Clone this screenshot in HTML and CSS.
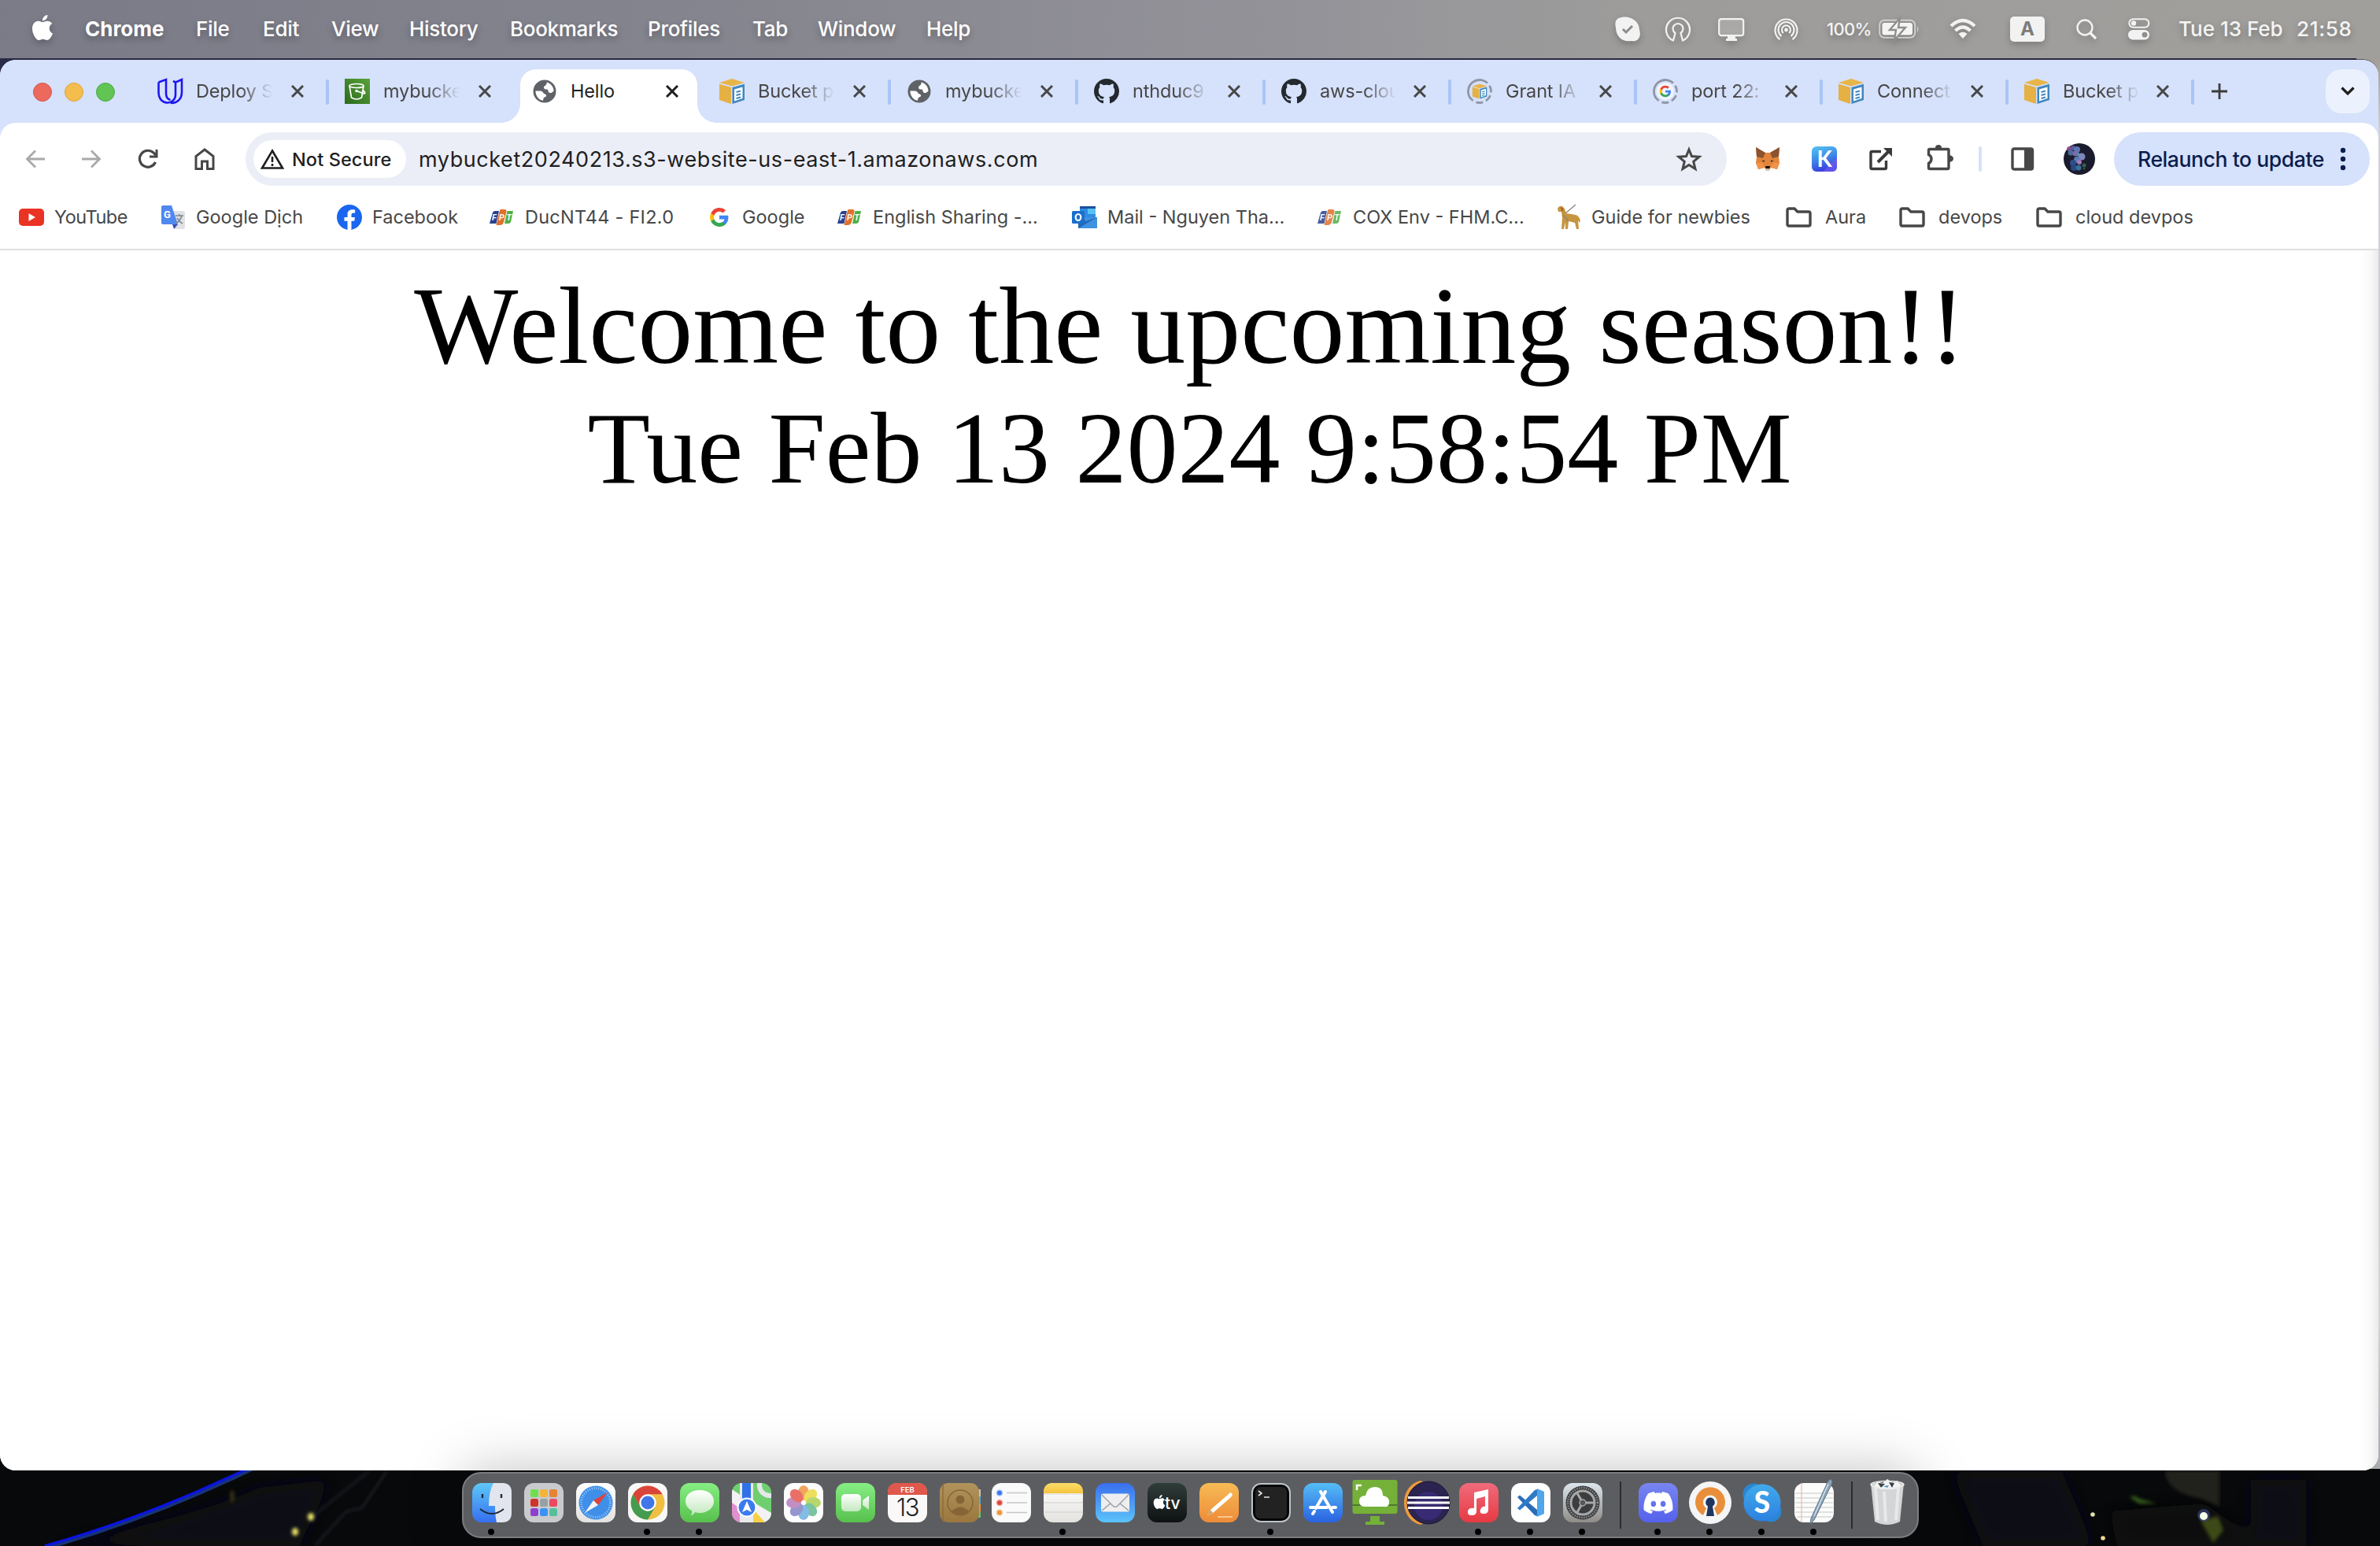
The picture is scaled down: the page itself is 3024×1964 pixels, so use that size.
FILE: index.html
```html
<!DOCTYPE html>
<html lang="en">
<head>
<meta charset="utf-8">
<title>Hello</title>
<link rel="stylesheet" href="styles.css">
</head>
<body>
<svg class="defs" width="0" height="0" aria-hidden="true">
  <defs>
    <linearGradient id="gGreen" x1="0" y1="0" x2="0" y2="1"><stop offset="0" stop-color="#86ee83"/><stop offset="1" stop-color="#57c04d"/></linearGradient>
    <linearGradient id="gWhite" x1="0" y1="0" x2="0" y2="1"><stop offset="0" stop-color="#fff"/><stop offset="1" stop-color="#e3e2df"/></linearGradient>
    <linearGradient id="gBubble" x1="0" y1="0" x2="0" y2="1"><stop offset="0" stop-color="#fff"/><stop offset="1" stop-color="#c3e8bd"/></linearGradient>
    <linearGradient id="gBlue" x1="0" y1="0" x2="0" y2="1"><stop offset="0" stop-color="#55bdf6"/><stop offset="1" stop-color="#2a62e0"/></linearGradient>
    <linearGradient id="gFinder" x1="0" y1="0" x2="0" y2="1"><stop offset="0" stop-color="#5ec8f8"/><stop offset="1" stop-color="#356ff0"/></linearGradient>
    <linearGradient id="gMail" x1="0" y1="0" x2="0" y2="1"><stop offset="0" stop-color="#3a6fee"/><stop offset="1" stop-color="#5cc3fa"/></linearGradient>
    <linearGradient id="gOrange" x1="0" y1="0" x2="0" y2="1"><stop offset="0" stop-color="#f7bb54"/><stop offset="1" stop-color="#ee8b3a"/></linearGradient>
    <linearGradient id="gRed" x1="0" y1="0" x2="0" y2="1"><stop offset="0" stop-color="#f06b7b"/><stop offset="1" stop-color="#e63a43"/></linearGradient>
    <linearGradient id="gTv" x1="0" y1="0" x2="0" y2="1"><stop offset="0" stop-color="#2f3d39"/><stop offset="1" stop-color="#0e1112"/></linearGradient>
    <linearGradient id="gSet" x1="0" y1="0" x2="0" y2="1"><stop offset="0" stop-color="#dbe6ec"/><stop offset="1" stop-color="#8f8c88"/></linearGradient>
    <linearGradient id="gContact" x1="0" y1="0" x2="0" y2="1"><stop offset="0" stop-color="#b1935c"/><stop offset="1" stop-color="#9b773f"/></linearGradient>
    <linearGradient id="gDiscord" x1="0" y1="0" x2="0" y2="1"><stop offset="0" stop-color="#7885f0"/><stop offset="1" stop-color="#5561ec"/></linearGradient>
    <linearGradient id="gKiwi" x1="0" y1="0" x2="0.3" y2="1"><stop offset="0" stop-color="#58c4f0"/><stop offset="0.5" stop-color="#3f8ee8"/><stop offset="1" stop-color="#3a3fe0"/></linearGradient>
    <linearGradient id="gS3" x1="0" y1="1" x2="1" y2="0"><stop offset="0" stop-color="#2a6b1d"/><stop offset="1" stop-color="#5aa33a"/></linearGradient>
    <linearGradient id="gNote" x1="0" y1="0" x2="0" y2="1"><stop offset="0" stop-color="#fbdd69"/><stop offset="1" stop-color="#f5c43c"/></linearGradient>
    <symbol id="close" viewBox="0 0 16 16"><path d="M1 1L15 15M15 1L1 15" stroke="currentColor" stroke-width="3" fill="none"/></symbol>
    <symbol id="cube" viewBox="0 0 32 32"><path d="M0 5L16 0 32 5 16 9.500z" fill="#e8b548"/><path d="M0 6.800L15 11V32L0 27z" fill="#e5b044"/><path d="M16.500 11L32 6.800V27L16.500 32z" fill="#3f87c0"/><path d="M19 13.500L29.500 10.500V25L19 28.500z" fill="#fff"/><path d="M21.500 17L27 15.500M21.500 21L27 19.500M21.500 25L27 23.500" stroke="#3f87c0" stroke-width="2"/></symbol>
    <symbol id="globe" viewBox="0 0 30 30"><circle cx="15" cy="15" r="14.500" fill="#5f6368"/><path d="M17 3.500C20 5 21 6 19.500 8.500 18 10 15.500 9.500 15.500 12 16 14 19 13 20.500 15.500 21.500 18 24 17 26.800 15.500 26.500 20 24 24 19.500 26 17 26.500 16.500 25 17 23 17.500 20.500 15 20.500 14.500 18 14 15.500 12 16.500 9 15.500 6 15 4.500 14 3.400 12.500 5 7 10 3 17 3.500z" fill="#fff" opacity=".0"/><path d="M3.500 14.500H9.500C13 14.500 13 18 15.500 18.500 18 19.500 17.500 22 15 22.500 13 23 13.500 25.500 13 26.800 7.500 26 3.300 20.500 3.500 14.500zM17.500 3.600C22.500 4.500 26.600 9.500 26.500 14.500 25 16.500 22.500 18 20.500 16.500 19 15 20 12.500 17.500 12.500 15.500 12.500 14 12 14 10 14 8 18.500 7.500 17.500 3.600z" fill="#fff"/></symbol>
    <symbol id="github" viewBox="0 0 16 16"><path fill="#24292f" d="M8 0C3.58 0 0 3.58 0 8c0 3.54 2.29 6.53 5.47 7.59.4.07.55-.17.55-.38 0-.19-.01-.82-.01-1.49-2.01.37-2.53-.49-2.69-.94-.09-.23-.48-.94-.82-1.13-.28-.15-.68-.52-.01-.53.63-.01 1.08.58 1.23.82.72 1.21 1.87.87 2.33.66.07-.52.28-.87.51-1.07-1.78-.2-3.64-.89-3.64-3.95 0-.87.31-1.59.82-2.15-.08-.2-.36-1.02.08-2.12 0 0 .67-.21 2.2.82.64-.18 1.32-.27 2-.27s1.36.09 2 .27c1.53-1.04 2.2-.82 2.2-.82.44 1.1.16 1.92.08 2.12.51.56.82 1.27.82 2.15 0 3.07-1.87 3.75-3.65 3.95.29.25.54.73.54 1.48 0 1.07-.01 1.93-.01 2.2 0 .21.15.46.55.38A8.01 8.01 0 0 0 16 8c0-4.42-3.58-8-8-8z"/></symbol>
    <symbol id="gee" viewBox="0 0 48 48"><path fill="#4285F4" d="M45.12 24.5c0-1.56-.14-3.06-.4-4.5H24v8.51h11.84c-.51 2.75-2.06 5.08-4.39 6.64v5.52h7.11c4.16-3.83 6.56-9.47 6.56-16.17z"/><path fill="#34A853" d="M24 46c5.94 0 10.92-1.97 14.56-5.33l-7.11-5.52c-1.97 1.32-4.49 2.1-7.45 2.1-5.73 0-10.58-3.87-12.31-9.07H4.34v5.7C7.96 41.07 15.4 46 24 46z"/><path fill="#FBBC05" d="M11.69 28.18C11.25 26.86 11 25.45 11 24s.25-2.86.69-4.18v-5.7H4.34C2.85 17.09 2 20.45 2 24c0 3.55.85 6.91 2.34 9.88l7.35-5.7z"/><path fill="#EA4335" d="M24 10.75c3.23 0 6.13 1.11 8.41 3.29l6.31-6.31C34.91 4.18 29.93 2 24 2 15.4 2 7.96 6.93 4.34 14.12l7.35 5.7c1.73-5.2 6.58-9.07 12.31-9.07z"/></symbol>
    <symbol id="fpt" viewBox="0 0 32 32"><path d="M4 10Q5 8 7 8H12L8.500 24H0z" fill="#27418f"/><path d="M14 6H19Q22 6 21.500 9L18 22Q17 26 13 26H8.500L12.500 9Q13 6 14 6z" fill="#e0702b"/><path d="M22.500 8H30L27 22Q26 24 24 24H19z" fill="#4faf45"/><g fill="#fff" font-family="Liberation Sans, sans-serif" font-weight="700" font-style="italic" font-size="10"><text x="3" y="19.500">F</text><text x="12" y="19.500">P</text><text x="21.500" y="19.500">T</text></g></symbol>
    <symbol id="ring" viewBox="0 0 32 32"><circle cx="16" cy="16" r="14.500" fill="none" stroke="#9096a6" stroke-width="2.800" stroke-dasharray="9 4 9 4 9 4 9 4 40 0" transform="rotate(-82 16 16)"/></symbol>
    <symbol id="folder" viewBox="0 0 33 26"><path d="M4 2H11L15 6H29Q31 6 31 8V22Q31 24 29 24H4Q2 24 2 22V4Q2 2 4 2z" fill="none" stroke="#474747" stroke-width="3.400"/></symbol>
    <symbol id="apple" viewBox="0 0 24 24"><path fill="#fff" d="M12.152 6.896c-.948 0-2.415-1.078-3.96-1.04-2.04.027-3.91 1.183-4.961 3.014-2.117 3.675-.546 9.103 1.519 12.09 1.013 1.454 2.208 3.09 3.792 3.039 1.52-.065 2.09-.987 3.935-.987 1.831 0 2.35.987 3.96.948 1.637-.026 2.676-1.48 3.676-2.948 1.156-1.688 1.636-3.325 1.662-3.415-.039-.013-3.182-1.221-3.22-4.857-.026-3.04 2.48-4.494 2.597-4.559-1.429-2.09-3.623-2.324-4.39-2.376-2-.156-3.675 1.09-4.61 1.09zM15.53 3.83c.843-1.012 1.4-2.427 1.245-3.83-1.207.052-2.662.805-3.532 1.818-.78.896-1.454 2.338-1.273 3.714 1.338.104 2.715-.688 3.559-1.701"/></symbol>
  </defs>
</svg>

<div class="desktop">
  <svg class="wallpaper" viewBox="0 0 3024 104" width="3024" height="104" aria-hidden="true">
    <defs><filter id="soft"><feGaussianBlur stdDeviation="2"/></filter><filter id="softer"><feGaussianBlur stdDeviation="12"/></filter></defs>
    <rect width="3024" height="104" fill="#08090b"/>
    <g filter="url(#softer)"><path d="M60 104Q240 70 330 30L420 20 380 104z" fill="#0d0e12"/><path d="M2480 10H2620L2660 104H2520z" fill="#0e1118"/><path d="M2680 60L2800 50 2880 104H2690z" fill="#0b0d0b"/><path d="M2860 20H2930V104H2860z" fill="#0f1014"/></g>
    <path d="M58 106Q196 67 338 -3" fill="none" stroke="#2458d0" stroke-width="6" opacity=".55"/>
    <path d="M57 104Q195 65 337 -5" fill="none" stroke="#0c14e0" stroke-width="3.500"/>
    <path d="M395 68L470 8M400 104L440 60 460 56 492 8" fill="none" stroke="#202126" stroke-width="2.500" filter="url(#soft)"/>
    <g filter="url(#soft)"><ellipse cx="395" cy="67" rx="4" ry="5" fill="#f2ea6a"/><ellipse cx="375" cy="86" rx="4" ry="5" fill="#f2ea6a"/><ellipse cx="295" cy="41" rx="2.500" ry="8" fill="#3c3818"/><path d="M2751 8H2820V54L2798 44Q2752 36 2751 8z" fill="#22241a"/><path d="M2706 42Q2712 38 2718 44L2740 50 2718 50z" fill="#355f1a"/><path d="M2796 72L2818 66 2825 84 2812 100z" fill="#3d4a18"/></g>
    <circle cx="2800" cy="65" r="8" fill="#4c58a0" opacity=".5"/><circle cx="2800" cy="66" r="5" fill="#f4ffe8"/><circle cx="2659" cy="64" r="2.800" fill="#e0e0b0"/><circle cx="2672" cy="94" r="2.800" fill="#f0d890"/>
  </svg>

  <header class="menubar">
    <nav class="menus">
      <svg class="apple" width="32" height="32"><use href="#apple"/></svg>
      <b class="m-chrome">Chrome</b><span>File</span><span>Edit</span><span>View</span><span>History</span><span class="m-book">Bookmarks</span><span>Profiles</span><span>Tab</span><span>Window</span><span>Help</span>
    </nav>
    <div class="status">
      <svg width="32" height="32" viewBox="0 0 32 32"><path d="M9 1C15 -1 31 3 31 17 34 25 29 33 21 31 9 33 1 25 1 14 -1 7 2 1 9 1z" fill="#f2f2f2"/><path d="M10 16L14 20 22 12" stroke="#8c8b8a" stroke-width="3" fill="none"/></svg>
      <svg width="32" height="32" viewBox="0 0 32 32"><path d="M10 30.500A15 15 0 1 1 22 30.500L19.500 21A6.500 6.500 0 1 0 12.500 21z" fill="none" stroke="#f2f2f2" stroke-width="2.200" stroke-linejoin="round"/></svg>
      <svg width="34" height="30" viewBox="0 0 34 30"><rect x="1.200" y="2.200" width="31" height="21" rx="3" fill="#fff" fill-opacity=".2" stroke="#f2f2f2" stroke-width="2.200"/><path d="M12 23H22V27H24V30H10V27H12z" fill="#f2f2f2"/></svg>
      <svg width="31" height="31" viewBox="0 0 31 31"><g fill="none" stroke="#f2f2f2" stroke-width="2.200"><path d="M7.500 28A14 14 0 1 1 23.500 28"/><path d="M9.500 24A10 10 0 1 1 21.500 24"/><path d="M11.800 20A5.500 5.500 0 1 1 19.200 20"/></g><circle cx="15.500" cy="16" r="2.400" fill="#f2f2f2"/></svg>
      <span class="pct">100%</span>
      <svg width="52" height="26" viewBox="0 0 52 26"><rect x="1.200" y="1.800" width="45" height="22" rx="6" fill="none" stroke="#cfcfcf" stroke-width="2"/><rect x="4.500" y="5" width="38.500" height="15.600" rx="3" fill="#f4f4f4"/><path d="M49 9Q52 13 49 17z" fill="#cfcfcf"/><path d="M27 -1L14 14H22L20 27 34 11H25z" fill="#f4f4f4" stroke="#8f8e8d" stroke-width="2.400"/></svg>
      <svg width="34" height="26" viewBox="0 0 34 26"><path d="M2 9Q17 -5 32 9M7.500 15Q17 6 26.500 15" fill="none" stroke="#f2f2f2" stroke-width="4.200"/><path d="M11.500 19Q17 14.500 22.500 19L17 25z" fill="#f2f2f2"/></svg>
      <span class="input">A</span>
      <svg width="27" height="27" viewBox="0 0 27 27"><circle cx="11" cy="11" r="9.500" fill="none" stroke="#f2f2f2" stroke-width="2.400"/><path d="M18 18L25 25" stroke="#f2f2f2" stroke-width="3.200"/></svg>
      <svg width="28" height="28" viewBox="0 0 28 28"><rect x="1.300" y="1.300" width="25" height="10.500" rx="5.200" fill="none" stroke="#f2f2f2" stroke-width="2"/><circle cx="7" cy="6.500" r="3.200" fill="#f2f2f2"/><rect x="0" y="15" width="27" height="12.500" rx="6.200" fill="#f2f2f2"/><circle cx="21" cy="21.200" r="3.400" fill="#8f8e8d"/></svg>
      <span class="date">Tue 13 Feb</span><span class="time">21:58</span>
    </div>
  </header>

  <main class="window">
    <div class="tabstrip">
      <div class="lights"><i class="red"></i><i class="amber"></i><i class="green"></i></div>
      <div class="tab sep"><svg class="fav" viewBox="0 0 32 32"><path d="M1.500 4.500L11 1V19Q11 25.500 16.500 27M1.500 4.500V17C1.500 35 23 34 23 20V4.500L31 1V17C31 27 24 31 17 31M23 4.500L20 3" fill="none" stroke="#1d17f0" stroke-width="2.600"/></svg><span class="title">Deploy S</span><svg class="x"><use href="#close"/></svg></div>
      <div class="tab"><svg class="fav" viewBox="0 0 32 32"><rect width="32" height="32" fill="url(#gS3)"/><g fill="none" stroke="#fff" stroke-width="1.700"><ellipse cx="15" cy="9" rx="9" ry="2.500"/><path d="M6 9L8.500 24Q15 28 21.500 24L24 9M15 15.500L25 19Q27 18 23.500 15"/></g><circle cx="15" cy="15.500" r="1.700" fill="#fff"/></svg><span class="title">mybucke</span><svg class="x"><use href="#close"/></svg></div>
      <div class="tab active"><svg class="fav globe"><use href="#globe"/></svg><span class="title">Hello</span><svg class="x"><use href="#close"/></svg></div>
      <div class="tab sep"><svg class="fav"><use href="#cube"/></svg><span class="title">Bucket p</span><svg class="x"><use href="#close"/></svg></div>
      <div class="tab sep"><svg class="fav globe"><use href="#globe"/></svg><span class="title">mybucke</span><svg class="x"><use href="#close"/></svg></div>
      <div class="tab sep"><svg class="fav"><use href="#github"/></svg><span class="title">nthduc9</span><svg class="x"><use href="#close"/></svg></div>
      <div class="tab sep late"><svg class="fav"><use href="#github"/></svg><span class="title">aws-clou</span><svg class="x"><use href="#close"/></svg></div>
      <div class="tab sep late"><svg class="fav" viewBox="0 0 32 32"><use href="#ring"/><use href="#cube" x="6.500" y="6.500" width="19" height="19"/></svg><span class="title">Grant IA</span><svg class="x"><use href="#close"/></svg></div>
      <div class="tab sep late"><svg class="fav" viewBox="0 0 32 32"><circle cx="16" cy="16" r="11" fill="#f1f4fc"/><use href="#ring"/><use href="#gee" x="8" y="8" width="16" height="16"/></svg><span class="title">port 22:</span><svg class="x"><use href="#close"/></svg></div>
      <div class="tab sep late"><svg class="fav"><use href="#cube"/></svg><span class="title">Connect</span><svg class="x"><use href="#close"/></svg></div>
      <div class="tab sep late"><svg class="fav"><use href="#cube"/></svg><span class="title">Bucket p</span><svg class="x"><use href="#close"/></svg></div>
      <svg class="plus" width="20" height="20" viewBox="0 0 20 20"><path d="M10 0V20M0 10H20" stroke="#3c3c3c" stroke-width="2.800"/></svg>
      <div class="search"><svg width="18" height="12" viewBox="0 0 18 12"><path d="M1.500 1.500L9 9 16.500 1.500" fill="none" stroke="#1f1f1f" stroke-width="3.200"/></svg></div>
    </div>

    <div class="toolbar">
      <svg width="26" height="24" viewBox="0 0 26 24"><path d="M25 12H3M13 1.500L2.500 12 13 22.500" fill="none" stroke="#a9a9a9" stroke-width="2.800"/></svg>
      <svg width="26" height="24" viewBox="0 0 26 24"><path d="M1 12H23M13 1.500L23.500 12 13 22.500" fill="none" stroke="#a9a9a9" stroke-width="2.800"/></svg>
      <svg width="26" height="26" viewBox="0 0 26 26"><path d="M22.500 17A10.500 10.500 0 1 1 20.500 5.500L24 9" fill="none" stroke="#474747" stroke-width="3.200"/><path d="M25.500 1V11.500H15V8.500H22.500V1z" fill="#474747"/></svg>
      <svg width="26" height="28" viewBox="0 0 26 28"><path d="M2 26.500V10.500L13 2 24 10.500V26.500H16.500V17H9.500V26.500z" fill="none" stroke="#474747" stroke-width="3"/></svg>
      <div class="omnibox">
        <div class="chip"><svg width="30" height="26" viewBox="0 0 30 26"><path d="M15 2.500L28 24.500H2z" fill="none" stroke="#1f1f1f" stroke-width="2.600"/><path d="M15 10V17M15 19V22" stroke="#1f1f1f" stroke-width="2.600"/></svg><span>Not Secure</span></div>
        <span class="url">mybucket20240213.s3-website-us-east-1.amazonaws.com</span>
        <svg class="star" width="34" height="32" viewBox="0 0 34 32"><path d="M17 4L20.500 12.500 30 13.200 22.700 19.300 25 28.500 17 23.500 9 28.500 11.300 19.300 4 13.200 13.500 12.500z" fill="none" stroke="#474747" stroke-width="3"/></svg>
      </div>
      <svg width="32" height="32" viewBox="0 0 32 32"><path d="M1 1L13 8H19L31 1 30 13 31 21 28 29 20 27 18 30H14L12 27 4 29 1 21 2 13z" fill="#e2843a"/><path d="M1 1L13 8 10 15 2 13zM31 1L19 8 22 15 30 13z" fill="#8b5330"/><path d="M1 21H9L12 27 4 29zM31 21H23L20 27 28 29z" fill="#f0944a"/><path d="M8 18L12 17.500 12 20zM24 18L20 17.500V20z" fill="#3a3432"/><path d="M13 25H19L18.500 28H13.500z" fill="#111"/><path d="M12.500 28.500H19.500L18 31H14z" fill="#d3c4b8"/></svg>
      <svg width="32" height="32" viewBox="0 0 32 32"><rect width="32" height="32" rx="6" fill="url(#gKiwi)"/><path d="M32 14V26Q32 32 26 32H14z" fill="#7a60f0" opacity=".6"/><text x="6.500" y="25.500" font-family="Lato, sans-serif" font-size="28" fill="#fff" font-weight="700">K</text></svg>
      <svg width="30" height="30" viewBox="0 0 30 30"><path d="M15 5.500H3.500Q2 5.500 2 7V26Q2 27.500 3.500 27.500H20Q21.500 27.500 21.500 26V17" fill="none" stroke="#3a3a3a" stroke-width="3.400"/><path d="M11 19L25 5" stroke="#3a3a3a" stroke-width="4"/><path d="M18 1H29V12z" fill="#3a3a3a"/></svg>
      <svg class="puzzle" width="34" height="34" viewBox="0 0 34 34"><path d="M4 6.500H27Q28 6.500 28 7.500V30Q28 31.500 26.500 31.500H4Q2.500 31.500 2.500 30V24.500Q6 23 6 19T2.500 13.500V8Q2.500 6.500 4 6.500z" fill="none" stroke="#474747" stroke-width="3.400"/><path d="M11 5Q11 1 15 1T19 5zM29 14Q34 15 34 18.500T29 23z" fill="#474747"/></svg>
      <i class="bar"></i>
      <svg width="30" height="30" viewBox="0 0 30 30"><rect x="2" y="2" width="25.500" height="26" rx="2" fill="none" stroke="#474747" stroke-width="3.400"/><rect x="17" y="1" width="11" height="28" fill="#474747"/></svg>
      <svg class="avatar" width="40" height="40" viewBox="0 0 40 40"><circle cx="20" cy="20" r="20" fill="#1a1b2c"/><g opacity=".85"><circle cx="7" cy="7" r="3" fill="#a04f9a"/><circle cx="12" cy="6" r="3" fill="#5b6ab0"/><circle cx="17" cy="8" r="4" fill="#6a84c4"/><circle cx="9" cy="12" r="3.500" fill="#4b7db4"/><circle cx="15" cy="13" r="3.500" fill="#a86cc0"/><circle cx="18" cy="14" r="2.500" fill="#5b9cc4"/><circle cx="23" cy="17" r="4.500" fill="#8f9ad6"/><circle cx="17" cy="21" r="4" fill="#6a8ccc"/><circle cx="20" cy="24" r="3" fill="#c08ad6"/><circle cx="12" cy="25" r="4" fill="#35589c"/><circle cx="13" cy="31" r="4" fill="#2d4f92"/><circle cx="19" cy="31" r="3.500" fill="#3c7fae"/><circle cx="26" cy="28" r="2.500" fill="#3c6a5c"/><circle cx="26" cy="32" r="1.300" fill="#56642c"/></g></svg>
      <button class="relaunch"><span>Relaunch to update</span><svg width="8" height="30" viewBox="0 0 8 30"><g fill="#0a1d4d"><circle cx="4" cy="4" r="3.200"/><circle cx="4" cy="15" r="3.200"/><circle cx="4" cy="26" r="3.200"/></g></svg></button>
    </div>

    <div class="bookmarks">
      <a class="tight"><svg viewBox="0 0 32 32"><rect y="5" width="32" height="22" rx="5" fill="#ea3323"/><path d="M12.500 11L21 16 12.500 21z" fill="#fff"/></svg><span>YouTube</span></a>
      <a><svg viewBox="0 0 32 32"><path d="M13 8H29Q31 8 31 10V29Q31 31 29 31H18z" fill="#dfe1e5"/><path d="M3 1H14L22 25H3Q1 25 1 23V3Q1 1 3 1z" fill="#4f88ee"/><path d="M15 25H22L17 31z" fill="#3a4fb4"/><text x="4" y="17" font-family="Roboto, sans-serif" font-size="13" font-weight="700" fill="#fff">G</text><path d="M19 14H29M24 12V14M27 14Q25 21 19 24M21 17Q24 22 28 24" stroke="#7d8794" stroke-width="1.600" fill="none"/></svg><span>Google Dịch</span></a>
      <a><svg viewBox="0 0 24 24"><circle cx="12" cy="12" r="11" fill="#fff"/><path fill="#1a66f0" d="M24 12.073c0-6.627-5.373-12-12-12s-12 5.373-12 12c0 5.990 4.388 10.954 10.125 11.854v-8.385H7.078v-3.470h3.047V9.430c0-3.007 1.792-4.669 4.533-4.669 1.312 0 2.686.235 2.686.235v2.953H15.830c-1.491 0-1.956.925-1.956 1.874v2.250h3.328l-.532 3.470h-2.796v8.385C19.612 23.027 24 18.062 24 12.073z"/></svg><span>Facebook</span></a>
      <a class="loose"><svg><use href="#fpt"/></svg><span>DucNT44 - FI2.0</span></a>
      <a><svg viewBox="0 0 32 32"><use href="#gee" x="3" y="3" width="26" height="26"/></svg><span>Google</span></a>
      <a><svg><use href="#fpt"/></svg><span>English Sharing -...</span></a>
      <a><svg viewBox="0 0 32 32"><path d="M10 2H30V16H10z" fill="#2f8be0"/><path d="M20 4H30V12H20z" fill="#58c2f4"/><path d="M10 2H30V5H10z" fill="#1c4f9c"/><path d="M8 16H32V30H8z" fill="#3f92df"/><path d="M32 16L8 30V16L18 21z" fill="#2467b8"/><rect y="8" width="16" height="16" rx="1.500" fill="#1a6fcc"/><ellipse cx="8" cy="16" rx="3.300" ry="4" fill="none" stroke="#fff" stroke-width="2.200"/></svg><span>Mail - Nguyen Tha...</span></a>
      <a><svg opacity=".85"><use href="#fpt"/></svg><span>COX Env - FHM.C...</span></a>
      <a><svg viewBox="0 0 32 32"><path d="M2 5Q4 1 8 2L11 5 13 11 25 13Q29 14 31 20L30 23 28 20 29 31H26L24 23 16 21 15 31H12V22L10 31H7L8 17 7 9 3 9z" fill="#c7953f"/><path d="M9 13L16 21M12 11L25 0" stroke="#8a8278" stroke-width="1.200"/><path d="M6 3L9 5 8 10z" fill="#8c5f22"/></svg><span>Guide for newbies</span></a>
      <a class="dir"><svg><use href="#folder"/></svg><span>Aura</span></a>
      <a class="dir"><svg><use href="#folder"/></svg><span>devops</span></a>
      <a class="dir"><svg><use href="#folder"/></svg><span>cloud devpos</span></a>
    </div>

    <section class="page">
      <div class="welcome">Welcome to the upcoming season!!</div>
      <div class="clock">Tue Feb 13 2024 9:58:54 PM</div>
    </section>
  </main>

  <footer class="dock">
    <div class="app on"><svg viewBox="-30 -30 60 60"><rect x="-25" y="-25" width="50" height="50" rx="12" fill="url(#gFinder)"/><path d="M2 -25H13Q25 -25 25 -13V13Q25 25 13 25H6Q4 17 4 4H-4Q-4 -14 2 -25z" fill="#e2e5ee"/><path d="M-12 -11V-6M12 -11V-6" stroke="#1f2a3a" stroke-width="2.400"/><path d="M-15 8Q0 20 15 8" fill="none" stroke="#1f2a3a" stroke-width="2"/></svg></div>
    <div class="app"><svg viewBox="-30 -30 60 60"><rect x="-25" y="-25" width="50" height="50" rx="12" fill="#c9cacc"/><g><rect x="-17" y="-17" width="10" height="10" rx="2.500" fill="#6fe04c"/><rect x="-5" y="-17" width="10" height="10" rx="2.500" fill="#f2b538"/><rect x="7" y="-17" width="10" height="10" rx="2.500" fill="#e58533"/><rect x="-17" y="-5" width="10" height="10" rx="2.500" fill="#d03328"/><rect x="-5" y="-5" width="10" height="10" rx="2.500" fill="#98a0a4"/><rect x="7" y="-5" width="10" height="10" rx="2.500" fill="#ea4960"/><rect x="-17" y="7" width="10" height="10" rx="2.500" fill="#8f3fd0"/><rect x="-5" y="7" width="10" height="10" rx="2.500" fill="#3a93f4"/><rect x="7" y="7" width="10" height="10" rx="2.500" fill="#55bf9c"/></g></svg></div>
    <div class="app"><svg viewBox="-30 -30 60 60"><rect x="-25" y="-25" width="50" height="50" rx="12" fill="url(#gWhite)"/><circle r="21.500" fill="#3f8fe8"/><circle r="18.500" fill="none" stroke="#9fcbf6" stroke-width="3" stroke-dasharray="1 1.900"/><path d="M15 -13L-3 -3 3 3z" fill="#e0433a"/><path d="M-14 13L-3 -3 3 3z" fill="#f4f4f4"/></svg></div>
    <div class="app on"><svg viewBox="-30 -30 60 60"><rect x="-25" y="-25" width="50" height="50" rx="12" fill="#f7f7f7"/><circle r="21.500" fill="#f0bf42"/><path d="M-18.600 -10.700A21.500 21.500 0 0 1 18.600 -10.700H0L-9.300 5.400z" fill="#d9453a"/><path d="M-18.600 -10.700A21.500 21.500 0 0 0 0 21.500L9.300 5.400 0 10.700 -9.300 5.400z" fill="#459b50"/><circle r="10.700" fill="#fff"/><circle r="8.500" fill="#4076e8"/></svg></div>
    <div class="app on"><svg viewBox="-30 -30 60 60"><rect x="-25" y="-25" width="50" height="50" rx="12" fill="url(#gGreen)"/><path d="M0 -16C11 -16 18 -10 18 -2S11 13 0 13Q-3 13 -6 12 -8 16 -12 16 -9 14 -10 10 -18 6 -18 -2C-18 -10 -11 -16 0 -16z" fill="url(#gBubble)"/></svg></div>
    <div class="app"><svg viewBox="-30 -30 60 60"><clipPath id="cMap"><rect x="-25" y="-25" width="50" height="50" rx="12"/></clipPath><g clip-path="url(#cMap)"><rect x="-25" y="-25" width="50" height="50" fill="#6fcf70"/><path d="M-25 -17L-13 -9V8H-25zM0 -2L25 13V25H12L0 10z" fill="#f2f2f4"/><path d="M-25 0L-14 8V25H-25z" fill="#e28fd0"/><path d="M2 8L17 25H2z" fill="#f6cf48"/><circle cx="23" cy="-22" r="13" fill="none" stroke="#e4e6ea" stroke-width="6"/><path d="M-15 -25H2V25H-15z" fill="#e9eaec"/><path d="M-12 -25H-1V5H-12z" fill="#2f72e8"/></g><circle cx="-6" cy="6" r="11.500" fill="#3a7cf0" stroke="#fff" stroke-width="2"/><path d="M-6 -2L0 12 -6 9 -12 12z" fill="#fff"/></svg></div>
    <div class="app"><svg viewBox="-30 -30 60 60"><rect x="-25" y="-25" width="50" height="50" rx="12" fill="#fdfdfd"/><g opacity=".82"><ellipse cy="-12.500" rx="7" ry="9.500" fill="#f0913a"/><ellipse cy="-12.500" rx="7" ry="9.500" fill="#ecd83c" transform="rotate(45)"/><ellipse cy="-12.500" rx="7" ry="9.500" fill="#a9cf4c" transform="rotate(90)"/><ellipse cy="-12.500" rx="7" ry="9.500" fill="#5fb88c" transform="rotate(135)"/><ellipse cy="-12.500" rx="7" ry="9.500" fill="#69aee0" transform="rotate(180)"/><ellipse cy="-12.500" rx="7" ry="9.500" fill="#7f80c4" transform="rotate(225)"/><ellipse cy="-12.500" rx="7" ry="9.500" fill="#b478b8" transform="rotate(270)"/><ellipse cy="-12.500" rx="7" ry="9.500" fill="#e65046" transform="rotate(315)"/></g></svg></div>
    <div class="app"><svg viewBox="-30 -30 60 60"><rect x="-25" y="-25" width="50" height="50" rx="12" fill="url(#gGreen)"/><rect x="-18" y="-11" width="25" height="22" rx="5" fill="url(#gBubble)"/><path d="M9 -3L17 -9V9L9 3z" fill="url(#gBubble)"/></svg></div>
    <div class="app"><svg viewBox="-30 -30 60 60"><rect x="-25" y="-25" width="50" height="50" rx="12" fill="#faf9f8"/><path d="M-25 -10V-13Q-25 -25 -13 -25H13Q25 -25 25 -13V-10z" fill="#e0574c"/><text y="-13" text-anchor="middle" font-family="Inter, sans-serif" font-weight="600" font-size="9.500" fill="#fff">FEB</text><text y="17" text-anchor="middle" font-family="Inter, sans-serif" font-size="31" font-weight="300" fill="#222" letter-spacing="-1.500">13</text></svg></div>
    <div class="app"><svg viewBox="-30 -30 60 60"><path d="M22 -17H27V-8H22z" fill="#c6c4c0"/><path d="M22 -8H27V2H22z" fill="#5aa7d8"/><path d="M22 2H27V11H22z" fill="#f0913a"/><path d="M22 11H27V19H22z" fill="#65c466"/><rect x="-25" y="-25" width="50" height="50" rx="11" fill="url(#gContact)"/><path d="M-21 -24V24" stroke="#8e6c39" stroke-width="1.500"/><circle cx="1" r="16" fill="none" stroke="#866535" stroke-width="1.500"/><circle cx="1" cy="-4" r="5.500" fill="#866535"/><path d="M-10 11Q1 0 12 11 1 20 -10 11z" fill="#866535"/></svg></div>
    <div class="app"><svg viewBox="-30 -30 60 60"><rect x="-25" y="-25" width="50" height="50" rx="12" fill="#fbfafa"/><path d="M-6 -12.500H20M-6 0H20M-6 12.500H20" stroke="#c6c6c6" stroke-width="1.300"/><circle cx="-15" cy="-12.500" r="3.600" fill="#3a76f0" stroke="#a9c4f8" stroke-width="1.500"/><circle cx="-15" r="3.600" fill="#e0443a" stroke="#f0aaa6" stroke-width="1.500"/><circle cx="-15" cy="12.500" r="3.600" fill="#e8953a" stroke="#f4cda0" stroke-width="1.500"/></svg></div>
    <div class="app on"><svg viewBox="-30 -30 60 60"><rect x="-25" y="-25" width="50" height="50" rx="12" fill="url(#gWhite)"/><path d="M-25 -12V-13Q-25 -25 -13 -25H13Q25 -25 25 -13V-12z" fill="url(#gNote)"/><path d="M-25 -11H25" stroke="#b9b7b0" stroke-dasharray="1 1"/><path d="M-25 0H25M-25 12H25" stroke="#d0cfca" stroke-width="1"/></svg></div>
    <div class="app"><svg viewBox="-30 -30 60 60"><rect x="-25" y="-25" width="50" height="50" rx="12" fill="url(#gMail)"/><rect x="-18" y="-11.500" width="36" height="23" rx="2.500" fill="#eeeef0"/><path d="M-17 -10L-3 4Q0 7 3 4L17 -10M-17 10L-6 1M17 10L6 1" fill="none" stroke="#9b9ca0" stroke-width="1.400"/></svg></div>
    <div class="app"><svg viewBox="-30 -30 60 60"><rect x="-25" y="-25" width="50" height="50" rx="12" fill="url(#gTv)"/><use href="#apple" x="-19" y="-10" width="18" height="18"/><text x="-3" y="8" font-family="Inter, sans-serif" font-size="21" font-weight="500" fill="#fff">tv</text></svg></div>
    <div class="app"><svg viewBox="-30 -30 60 60"><rect x="-25" y="-25" width="50" height="50" rx="12" fill="url(#gOrange)"/><path d="M-15 16L-11 9 11 -10Q14 -14 16 -12T15 -7L-8 13z" fill="#fff"/><path d="M-15 16L-11 9 -8 13z" fill="#cfa064"/><path d="M-2 18H17" stroke="#fcd9a4" stroke-width="1.500"/></svg></div>
    <div class="app on"><svg viewBox="-30 -30 60 60"><rect x="-24" y="-24" width="48" height="48" rx="11" fill="#050505" stroke="#bcc4c8" stroke-width="2"/><rect x="-20" y="-20" width="40" height="40" rx="6" fill="#222"/><path d="M-16 -15L-12 -12 -16 -9M-9 -7H-2" fill="none" stroke="#e8e8e8" stroke-width="1.600"/></svg></div>
    <div class="app"><svg viewBox="-30 -30 60 60"><rect x="-25" y="-25" width="50" height="50" rx="12" fill="url(#gBlue)"/><path d="M-3 -14L12 12M3 -14L-9 7M-16 6H5M12 6H16M-11 11L-13 14" stroke="#fff" stroke-width="4" stroke-linecap="round"/></svg></div>
    <div class="app"><svg viewBox="-30 -30 60 60"><rect x="-28.500" y="-29" width="57" height="43" rx="3" fill="#75b139"/><path d="M-28.500 3H28.500" stroke="#4f7a2c" stroke-width="2"/><path d="M-6 17H6V24H12V28H-12V24H-6z" fill="#75b139"/><path d="M-23 -16V-22H-17" stroke="#fff" stroke-width="2.500" fill="none"/><path d="M-13 5Q-20 5 -20 -2T-12 -9Q-10 -20 0 -20T10 -9Q18 -8 18 -1T12 5z" fill="#fff"/></svg></div>
    <div class="app"><svg viewBox="-30 -30 60 60"><path d="M-8 -28C-36 -22 -36 22 -8 28L-2 25V-25z" fill="#ee9a3e"/><circle cx="2" r="27" fill="#2b2350" stroke="#1b1736"/><circle cx="2" cy="4" r="18" fill="#43308a" opacity=".6"/><path d="M-24 -6.500H28M-25 0H29M-24 6.500H28" stroke="#fff" stroke-width="2.800"/></svg></div>
    <div class="app on"><svg viewBox="-30 -30 60 60"><rect x="-25" y="-25" width="50" height="50" rx="12" fill="url(#gRed)"/><path d="M-6 -13L12 -17V9Q12 14 6 14T2 9 8 5V-8L-3 -5V11Q-3 16 -9 16T-14 11 -6 7z" fill="#fff"/></svg></div>
    <div class="app on"><svg viewBox="-30 -30 60 60"><rect x="-25" y="-25" width="50" height="50" rx="12" fill="#fff"/><path d="M-17 -7L-14 -9.500 8 9V17L5 16z" fill="#2a6cb8"/><path d="M-17 7L-14 9.500 8 -9V-17L5 -16z" fill="#2f7ac8"/><path d="M8 -18L17 -14V14L8 18z" fill="#4fa6ea"/></svg></div>
    <div class="app on"><svg viewBox="-30 -30 60 60"><rect x="-25" y="-25" width="50" height="50" rx="12" fill="url(#gSet)"/><circle r="21.500" fill="#3b3d3f"/><circle r="19" fill="none" stroke="#8a8c8e" stroke-width="2.500" stroke-dasharray="1.500 1.500"/><circle r="15" fill="none" stroke="#a6a8a8" stroke-width="3"/><path d="M0 0H14M0 0L-7 -12M0 0L-7 12" stroke="#a6a8a8" stroke-width="3"/><circle r="4" fill="#55585a" stroke="#a6a8a8" stroke-width="1.500"/></svg></div>
    <i class="rule"></i>
    <div class="app on"><svg viewBox="-30 -30 60 60"><rect x="-25" y="-25" width="50" height="50" rx="12" fill="url(#gDiscord)"/><path transform="translate(-18.500 -18.500) scale(1.54)" fill="#fff" d="M20.317 4.370a19.791 19.791 0 00-4.885-1.515.074.074 0 00-.079.037c-.211.375-.445.865-.608 1.250-1.845-.276-3.680-.276-5.487 0-.164-.393-.406-.874-.618-1.250a.077.077 0 00-.079-.037 19.736 19.736 0 00-4.885 1.515.070.070 0 00-.032.028C.533 9.046-.319 13.580.099 18.058a.082.082 0 00.031.056c2.053 1.508 4.041 2.423 5.993 3.029a.078.078 0 00.084-.028c.462-.630.873-1.295 1.226-1.994a.076.076 0 00-.042-.106c-.653-.248-1.274-.550-1.872-.892a.077.077 0 01-.008-.128c.126-.094.252-.192.372-.291a.074.074 0 01.078-.011c3.928 1.793 8.180 1.793 12.061 0a.074.074 0 01.079.010c.120.099.246.198.373.292a.077.077 0 01-.007.128 12.299 12.299 0 01-1.873.891.077.077 0 00-.041.107c.360.698.772 1.363 1.225 1.993a.076.076 0 00.084.029c1.961-.607 3.950-1.522 6.002-3.029a.077.077 0 00.031-.055c.500-5.177-.838-9.674-3.549-13.660a.061.061 0 00-.031-.029zM8.020 15.331c-1.183 0-2.157-1.086-2.157-2.419 0-1.333.956-2.419 2.157-2.419 1.211 0 2.176 1.095 2.157 2.419 0 1.333-.956 2.419-2.157 2.419zm7.975 0c-1.183 0-2.157-1.086-2.157-2.419 0-1.333.955-2.419 2.157-2.419 1.211 0 2.176 1.095 2.157 2.419 0 1.333-.946 2.419-2.157 2.419Z"/></svg></div>
    <div class="app on"><svg viewBox="-30 -30 60 60"><circle r="27" fill="#f5f5f6"/><path d="M-9 16A19 19 0 1 1 9 16L5 7A9 9 0 1 0 -5 7z" fill="#e98f3c"/><path d="M0 -6.500A6 6 0 0 1 3 4.500L5 17H-5L-3 4.500A6 6 0 0 1 0 -6.500z" fill="#1f3560"/></svg></div>
    <div class="app on"><svg viewBox="-30 -30 60 60"><circle cx="-11" cy="-11" r="13.500" fill="#2b86d0"/><circle cx="11" cy="11" r="13.500" fill="#2b86d0"/><circle r="23.500" fill="url(#gBlue)"/><circle r="23.500" fill="#2f9be2" opacity=".55"/><text y="13" text-anchor="middle" font-family="Lato, sans-serif" font-size="37" font-weight="900" fill="#fff">S</text></svg></div>
    <div class="app on"><svg viewBox="-30 -30 60 60"><rect x="-25" y="-25" width="50" height="50" rx="12" fill="#fcfcfa"/><path d="M-24 -12H24M-24 -6H24M-24 0H24M-24 6H24M-24 12H24M-22 18H22" stroke="#c4c5c8" stroke-width="1.200"/><path d="M-16 -25V25" stroke="#f0b8b0" stroke-width="1.200"/><path d="M-5 27L-4 20 17 -26Q20 -31 22 -29T22 -23L0 22z" fill="#8ba3b8" stroke="#5e7488" stroke-width="1"/><path d="M0 17L18 -24" stroke="#dce8f0" stroke-width="1.300"/></svg></div>
    <i class="rule"></i>
    <div class="app bin"><svg viewBox="-30 -30 60 60"><path d="M-21 -25L-16 24Q0 32 16 24L21 -25z" fill="#d4d5d6"/><path d="M-15 -20L-12 22M14 -20L11 22M-4 -14L-2 24" stroke="#eceded" stroke-width="4" opacity=".8"/><path d="M-17 -20L-13 -27 -6 -25 0 -30 6 -26 13 -28 18 -20 8 -17 -8 -17z" fill="#f4f4f2"/><path d="M-12 -25L-8 -19 -3 -24zM2 -26L6 -19 9 -25z" fill="#39424a"/><path d="M-5 -21L0 -19 2 -22z" fill="#4a90c0"/><ellipse cy="-23" rx="21" ry="4.500" fill="none" stroke="#e9eaea" stroke-width="1.500"/></svg></div>
  </footer>
</div>
</body>
</html>
```
FILE: styles.css
```css
* { box-sizing: border-box; }

body {
  margin: 0;
  font-family: Inter, "Liberation Sans", sans-serif;
  overflow: hidden;
}

.defs { position: absolute; }
svg { display: block; flex: none; overflow: visible; }

.desktop {
  position: relative;
  display: flex;
  flex-direction: column;
  width: 3024px;
  height: 1964px;
  background: linear-gradient(#2b2a48 0, #2b2a48 100px, #0b0b10 300px, #06070a 1964px);
  overflow: hidden;
}

/* night scene behind the dock */
.wallpaper { position: absolute; left: 0; bottom: 0; }

.desktop::after {
  content: "";
  position: absolute;
  top: 74px;
  right: 0;
  width: 30px;
  height: 1792px;
  background: linear-gradient(#a19d97, #cfd0d4 5%, #d4d4d6 90%, #a9aaad);
}

/* menu bar */
.menubar {
  display: flex;
  justify-content: space-between;
  height: 74px;
  margin-bottom: 2px;
  background: linear-gradient(90deg, #7b7b88, #85858f 30%, #949399 55%, #9d9c9b 68%, #a09f9c);
  color: #fff;
  font-size: 26px;
  font-weight: 500;
  text-shadow: 0 4px 8px rgba(0, 0, 0, .3);
}

.menubar svg { filter: drop-shadow(0 4px 4px rgba(0, 0, 0, .22)); }

.menus {
  display: grid;
  grid-template-columns: 70px 141px 85px 87px 99px 128px 175px 133px 83px 138px 80px;
  align-items: center;
  padding: 0 0 1px 38px;
  letter-spacing: -.3px;
}

.apple { margin-top: -3px; }
.m-chrome { font-weight: 700; letter-spacing: 0; }

.status {
  display: grid;
  grid-template-columns: 64px 67px 71px 67px 66px 90px 77px 84px 66px 64px 150px 106px;
  align-items: center;
  color: #f4f4f4;
}

.pct { font-size: 22px; letter-spacing: -.7px; }
.date, .time { padding-bottom: 2px; }
.time { letter-spacing: .7px; }

.input {
  width: 44px;
  height: 32px;
  border-radius: 5px;
  background: #f2f2f2;
  color: #7d7c7b;
  font-size: 24px;
  font-weight: 700;
  line-height: 32px;
  text-align: center;
  text-shadow: none;
  box-shadow: 0 4px 8px rgba(0, 0, 0, .2);
}

/* browser window */
.window {
  position: relative;
  z-index: 1;
  display: flex;
  flex-direction: column;
  width: 3022px;
  height: 1792px;
  border-radius: 20px;
  background: linear-gradient(#d6e1fb 110px, #fff 110px);
  overflow: hidden;
  box-shadow: 0 -1px 0 rgba(40, 40, 50, .6);
}

.tabstrip {
  display: flex;
  align-items: center;
  height: 80px;
  background: #d6e1fb;
  color: #474747;
  font-size: 23.5px;
}

.lights { display: flex; gap: 16px; width: 178px; padding-left: 42px; margin-top: 2px; }
.lights i { width: 24px; height: 24px; border-radius: 50%; }
.red { background: #ec695e; border: 1px solid #d5544a; }
.amber { background: #f4be4f; border: 1px solid #dba53b; }
.green { background: #61c454; border: 1px solid #4caa40; }

.tab {
  position: relative;
  display: flex;
  align-items: center;
  width: 238px;
  height: 80px;
  padding-left: 22px;
}
.tab.late { width: 236px; }
.tab.late .x { margin-left: 22px; }
.tab.sep::after {
  content: "";
  position: absolute;
  right: -2px;
  top: 25px;
  width: 4px;
  height: 32px;
  border-radius: 2px;
  background: #a9c4f7;
}
.fav { width: 32px; height: 32px; margin-right: 17px; }
.fav.globe { width: 30px; height: 30px; margin: 0 18px 0 1px; }
.title {
  flex: none;
  width: 97px;
  padding-bottom: 1px;
  letter-spacing: -.15px;
  white-space: nowrap;
  -webkit-mask-image: linear-gradient(90deg, #000 58%, transparent);
  mask-image: linear-gradient(90deg, #000 58%, transparent);
}
.x { width: 16px; height: 16px; margin-left: 24px; }

.tab.active { color: #1f1f1f; z-index: 1; }
.tab.active .title { -webkit-mask-image: none; mask-image: none; }
.tab.active::before {
  content: "";
  position: absolute;
  z-index: -1;
  inset: 12px 6px 0 7px;
  border-radius: 20px 20px 0 0;
  background: #fff;
}
.tab.active::after {
  content: "";
  position: absolute;
  z-index: -1;
  left: -17px;
  right: -18px;
  bottom: 0;
  height: 24px;
  background:
    radial-gradient(circle at 0 0, transparent 23.5px, #fff 24px) left / 24px 24px no-repeat,
    radial-gradient(circle at 100% 0, transparent 23.5px, #fff 24px) right / 24px 24px no-repeat;
}

.plus { margin-left: 24px; }
.search {
  display: flex;
  align-items: center;
  justify-content: center;
  width: 56px;
  height: 56px;
  margin: 0 11px 0 auto;
  border-radius: 20px;
  background: #ebf2fd;
}

/* toolbar */
.toolbar {
  display: grid;
  grid-template-columns: 71px 72px 72px 65px 1918px 72px 73px 73px 66px 41px 67px 64px 325px;
  align-items: center;
  height: 80px;
  padding: 12px 0 0 32px;
  border-radius: 20px 20px 0 0;
  background: #fff;
}

.omnibox {
  display: flex;
  align-items: center;
  width: 1882px;
  height: 68px;
  padding: 0 31px 0 10px;
  border-radius: 34px;
  background: #ebeef7;
}
.chip {
  display: flex;
  align-items: center;
  gap: 10px;
  width: 194px;
  height: 48px;
  padding-left: 9px;
  border-radius: 24px;
  background: #fff;
  color: #1f1f1f;
  font-size: 23.5px;
  font-weight: 500;
  letter-spacing: .1px;
  white-space: nowrap;
}
.url { margin-left: 16px; color: #1f1f1f; font-size: 27px; letter-spacing: .57px; white-space: nowrap; }
.star { margin-left: auto; }
.puzzle { margin-top: -4px; }
.bar { width: 4px; height: 32px; border-radius: 2px; background: #d6e1fb; }

.relaunch {
  display: flex;
  align-items: center;
  justify-content: space-between;
  height: 68px;
  padding: 0 30px;
  border: 0;
  border-radius: 34px;
  background: #d6e1fb;
  color: #0a1d4d;
  font: 500 26.5px Inter, sans-serif;
  letter-spacing: -.4px;
  white-space: nowrap;
}

/* bookmarks */
.bookmarks {
  display: grid;
  grid-template-columns: 180px 224px 194px 276px 166px 298px 312px 303px 292px 144px 174px 220px;
  align-items: center;
  height: 82px;
  padding-left: 24px;
  border-bottom: 2px solid #dfdfdf;
  background: #fff;
  color: #474747;
  font-size: 23.5px;
}
.bookmarks a { display: flex; align-items: center; gap: 13px; white-space: nowrap; }
.bookmarks span { padding-bottom: 1px; }
.bookmarks .tight { letter-spacing: -.5px; }
.bookmarks .loose { letter-spacing: .25px; }
.bookmarks svg { width: 32px; height: 32px; }
.bookmarks .dir { gap: 17px; }
.bookmarks .dir svg { width: 33px; height: 26px; }

/* page */
.page {
  flex: 1;
  padding-top: 15px;
  background: linear-gradient(270deg, #eaeaea, #f9f9f9 10px, #fff 24px);
  color: #000;
  font-family: "Liberation Serif", "Times New Roman", serif;
  text-align: center;
}
.welcome { padding-left: 2px; font-size: 140px; line-height: 161px; }
.clock { padding-left: 1px; font-size: 130px; line-height: 150px; }

/* dock */
.dock {
  position: relative;
  z-index: 2;
  display: flex;
  align-items: flex-start;
  width: 1851px;
  height: 84px;
  margin: 2px 0 0 587px;
  padding: 7px 0 0 3px;
  border: 2px solid #7b7c7e;
  border-radius: 24px;
  background: #5c5d60;
  box-shadow: 0 0 70px rgba(0, 0, 0, .26);
}
.app { position: relative; display: flex; justify-content: center; width: 66px; }
.app svg { width: 60px; height: 60px; }
.app.on::after {
  content: "";
  position: absolute;
  top: 63px;
  left: 28px;
  width: 8px;
  height: 8px;
  border-radius: 50%;
  background: #000;
}
.app.bin { width: 60px; }
.rule { width: 2px; height: 60px; margin: 3px 14px 0; background: #2b2c2e; }
```
